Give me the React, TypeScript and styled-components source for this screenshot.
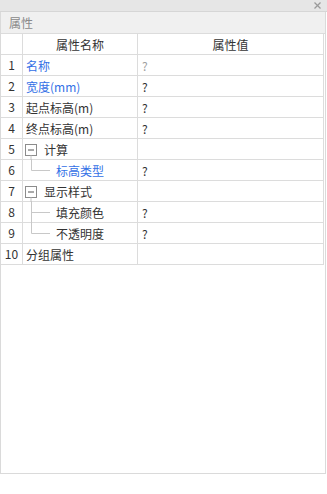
import React from 'react';
import styled, { createGlobalStyle } from 'styled-components';

const GlobalStyle = createGlobalStyle`
    html, body {
        margin: 0;
        padding: 0;
        background: #fff;
    }
    body {
        font-family: "Noto Sans CJK SC", "Noto Sans", "Liberation Sans", sans-serif;
        font-size: 12px;
        color: #333;
    }
`;

const Panel = styled.div`
    width: 326px;
    height: 474px;
    box-sizing: border-box;
    border: 1px solid #dadada;
    border-top: none;
    display: flex;
    flex-direction: column;
    background: #fff;
`;

const TopBar = styled.div`
    height: 11px;
    margin: 0 -2px 0 -1px;
    background: #e6e6e6;
    border-bottom: 1px solid #d6d6d6;
    display: flex;
    justify-content: flex-end;
    align-items: center;
    padding-right: 6px;
`;

const CloseIcon = styled.svg`
    width: 7px;
    height: 7px;
    stroke: #9a9a9a;
    stroke-width: 1.2;
`;

const TitleBar = styled.div`
    height: 21px;
    background: #f0f0f0;
    border-bottom: 1px solid #dcdcdc;
    color: #8a8a8a;
    font-size: 12px;
    line-height: 22px;
    padding-left: 8px;
`;

const Table = styled.div`
    width: 323px;
    display: flex;
    flex-direction: column;
`;

const Row = styled.div`
    display: flex;
    height: 20px;
    border-bottom: 1px solid #dcdcdc;
`;

const IndexCell = styled.div`
    width: 21px;
    border-right: 1px solid #dcdcdc;
    text-align: center;
    line-height: 20px;
    color: #333;
`;

const NameCell = styled.div<{ $head?: boolean; $blue?: boolean }>`
    width: 115px;
    border-right: 1px solid #dcdcdc;
    display: flex;
    align-items: center;
    justify-content: ${p => (p.$head ? 'center' : 'flex-start')};
    padding-left: ${p => (p.$head ? 0 : 3)}px;
    box-sizing: border-box;
    color: ${p => (p.$blue ? '#3370e6' : '#333')};
    white-space: nowrap;
`;

const ValueCell = styled.div<{ $head?: boolean; $faint?: boolean }>`
    flex: 1;
    border-right: 1px solid #dcdcdc;
    display: flex;
    align-items: center;
    justify-content: ${p => (p.$head ? 'center' : 'flex-start')};
    padding-left: ${p => (p.$head ? 0 : 4)}px;
    color: ${p => (p.$faint ? '#a0a0a0' : '#333')};
`;

const Guide = styled.svg<{ $w: number }>`
    width: ${p => p.$w}px;
    height: 20px;
    flex: none;
    margin-left: -3px;
    overflow: visible;
`;

type Kind = 'plain' | 'group' | 'child' | 'childMid';

interface Prop {
    name: string;
    value?: string;
    kind?: Kind;
    blue?: boolean;
    faint?: boolean;
}

const rows: Prop[] = [
    { name: '名称', value: '?', blue: true, faint: true },
    { name: '宽度(mm)', value: '?', blue: true },
    { name: '起点标高(m)', value: '?' },
    { name: '终点标高(m)', value: '?' },
    { name: '计算', kind: 'group' },
    { name: '标高类型', value: '?', kind: 'child', blue: true },
    { name: '显示样式', kind: 'group' },
    { name: '填充颜色', value: '?', kind: 'childMid' },
    { name: '不透明度', value: '?', kind: 'child' },
    { name: '分组属性' },
];

const TreeMark = ({ kind }: { kind: Kind }) => {
    if (kind === 'group') {
        return (
            <Guide $w={21} viewBox="0 0 21 20">
                <rect x="2.5" y="5.5" width="11" height="11" fill="#fff" stroke="#8c8c8c" />
                <line x1="5" y1="11" x2="11" y2="11" stroke="#555" />
                <line x1="8" y1="16.5" x2="8" y2="21" stroke="#c8c8c8" />
            </Guide>
        );
    }
    if (kind === 'child' || kind === 'childMid') {
        return (
            <Guide $w={33} viewBox="0 0 33 20">
                <line x1="8.5" y1="-1" x2="8.5" y2={kind === 'childMid' ? 21 : 10.5} stroke="#c8c8c8" />
                <line x1="8.5" y1="10.5" x2="27" y2="10.5" stroke="#c8c8c8" />
            </Guide>
        );
    }
    return null;
};

const App = () => {
    return (
        <>
            <GlobalStyle />
            <Panel>
                <TopBar>
                    <CloseIcon viewBox="0 0 7 7">
                        <line x1="0.5" y1="0.5" x2="6.5" y2="6.5" />
                        <line x1="6.5" y1="0.5" x2="0.5" y2="6.5" />
                    </CloseIcon>
                </TopBar>
                <TitleBar>属性</TitleBar>
                <Table>
                    <Row>
                        <IndexCell />
                        <NameCell $head>属性名称</NameCell>
                        <ValueCell $head>属性值</ValueCell>
                    </Row>
                    {rows.map((r, i) => (
                        <Row key={i}>
                            <IndexCell>{i + 1}</IndexCell>
                            <NameCell $blue={r.blue}>
                                {r.kind && <TreeMark kind={r.kind} />}
                                {r.name}
                            </NameCell>
                            <ValueCell $faint={r.faint}>{r.value}</ValueCell>
                        </Row>
                    ))}
                </Table>
            </Panel>
        </>
    );
};

export default App;
